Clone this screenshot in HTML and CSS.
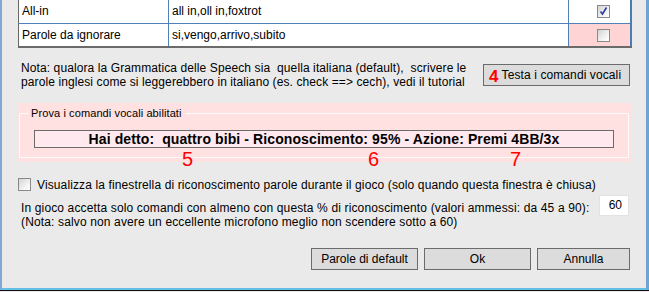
FILE: index.html
```html
<!DOCTYPE html>
<html>
<head>
<meta charset="utf-8">
<link rel="stylesheet" href="styles.css">
</head>
<body>
<div class="window">
 <div class="content">
  <table class="grid">
    <tr class="r1">
      <td class="c1">All-in</td>
      <td class="c2">all in,oll in,foxtrot</td>
      <td class="c3"><span class="cb checked"><svg width="11" height="11" viewBox="0 0 11 11"><path d="M2.5 5.5 L4.5 8 L8.5 1.5" fill="none" stroke="#2c3e9c" stroke-width="1.6"/></svg></span></td>
    </tr>
    <tr class="r2">
      <td class="c1">Parole da ignorare</td>
      <td class="c2">si,vengo,arrivo,subito</td>
      <td class="c3 pink"><span class="cb"></span></td>
    </tr>
  </table>

  <div class="nota-row">
    <p class="nota">Nota: qualora la Grammatica delle Speech sia&nbsp; quella italiana (default),&nbsp; scrivere le<br>parole inglesi come si leggerebbero in italiano (es. check ==&gt; cech), vedi il tutorial</p>
    <button class="btn test"><span class="num n4">4</span>Testa i comandi vocali</button>
  </div>

  <div class="group">
    <fieldset class="frame">
      <legend>Prova i comandi vocali abilitati</legend>
      <div class="result">Hai detto:&nbsp; quattro bibi - Riconoscimento: 95% - Azione: Premi 4BB/3x</div>
    </fieldset>
    <div class="nums">
      <span class="num n5">5</span>
      <span class="num n6">6</span>
      <span class="num n7">7</span>
    </div>
  </div>

  <label class="chk-row"><span class="cb"></span>Visualizza la finestrella di riconoscimento parole durante il gioco (solo quando questa finestra è chiusa)</label>

  <div class="accept-row">
    <p class="accept">In gioco accetta solo comandi con almeno con questa % di riconoscimento (valori ammessi: da 45 a 90):<br>(Nota: salvo non avere un eccellente microfono meglio non scendere sotto a 60)</p>
    <div class="input">60</div>
  </div>

  <div class="buttons">
    <button class="btn b1">Parole di default</button>
    <button class="btn b2">Ok</button>
    <button class="btn b3">Annulla</button>
  </div>
 </div>
</div>
</body>
</html>
```

FILE: styles.css
```css
* { box-sizing: border-box; }
html, body { margin: 0; padding: 0; }
body {
  width: 649px;
  height: 292px;
  overflow: hidden;
  font-family: "Liberation Sans", Arial, sans-serif;
  font-size: 12px;
  color: #000;
  background: #ebebeb;
}
.window {
  width: 649px;
  height: 292px;
  background: #eaeaea;
  border-left: 2px solid #7fa9d4;
  border-right: 3px solid #6fa3d6;
  border-bottom: 3px solid #62bfe6;
  padding-left: 16px;
  position: relative;
}
.window::after {
  content: "";
  position: absolute;
  left: -2px; right: -3px; bottom: -3px;
  height: 1px;
  background: #111;
}
.content { width: 612px; }
.grid {
  border-collapse: collapse;
  width: 612px;
  table-layout: fixed;
  background: #fff;
  margin-top: -1px;
}
.grid td {
  height: 24px;
  padding: 0 0 0 3px;
  border: 1px solid #4f80b8;
  font-size: 12px;
  vertical-align: middle;
}
.grid .c1 { width: 150px; border-left: 1px solid #666; }
.grid .c2 { width: 400px; }
.grid .c3 { width: 62px; text-align: center; padding: 0; border-right: 2px solid #4a7db3; }
.grid .r2 td { border-bottom: 2px solid #6a6a6a; }
.grid .r1 td { border-top: none; }
.pink { background: #ffd4d4; }
.cb {
  display: inline-block;
  flex: none;
  width: 13px;
  height: 13px;
  border: 1px solid #8a8a8a;
  background: linear-gradient(135deg, #d4d4d4 0%, #f6f6f6 70%, #fff 100%);
  vertical-align: middle;
  position: relative;
}
.cb svg { position: absolute; left: 0; top: 0; }
.c3 .cb { margin-left: 8px; }

.nota-row {
  display: grid;
  grid-template-columns: 465px 147px;
  margin-top: 13px;
  align-items: start;
}
.nota {
  margin: 0;
  padding-left: 3px;
  line-height: 14px;
  white-space: nowrap;
  letter-spacing: 0.1px;
}
.btn {
  font-family: "Liberation Sans", Arial, sans-serif;
  font-size: 12px;
  height: 22px;
  border: 1px solid #6b6b6b;
  background: #dcdcdc;
  color: #000;
  padding: 0;
}
.test {
  margin-top: 3px;
  text-align: left;
  padding-left: 5px;
  display: flex;
  align-items: center;
  letter-spacing: 0.1px;
}
.num {
  color: #f00;
  font-family: "Liberation Sans", Arial, sans-serif;
}
.n4 { font-size: 17px; font-weight: bold; margin-right: 3px; line-height: 1; position: relative; top: 1px; }

.group {
  margin-top: 14px;
  background: #ffe1e1;
  height: 59px;
  width: 613px;
  padding: 0 2px 0 1px;
  position: relative;
}
.frame {
  margin: 0;
  padding: 9px 14px 0 14px;
  border: 1px solid #fbfbfb;
  height: 50px;
  position: relative;
  top: 5px;
}
.frame legend {
  padding: 0 3px;
  margin-left: -6px;
  font-size: 11px;
  line-height: 11px;
  letter-spacing: 0.1px;
}
.result {
  height: 18px;
  border: 1px solid #6b6b6b;
  background: #ffe9ee;
  text-align: center;
  font-weight: bold;
  font-size: 14px;
  line-height: 16px;
  letter-spacing: 0.1px;
  margin-top: 2px;
}
.nums {
  position: absolute;
  left: 0; top: 46px;
  width: 100%;
  height: 20px;
}
.nums .num { position: absolute; font-size: 20px; line-height: 20px; }
.n5 { left: 164px; }
.n6 { left: 350px; }
.n7 { left: 492px; }

.chk-row {
  display: flex;
  align-items: center;
  gap: 6px;
  margin-top: 16px;
  height: 13px;
  white-space: nowrap;
  letter-spacing: 0.12px;
}
.accept-row {
  display: flex;
  justify-content: space-between;
  margin-top: 4px;
}
.accept {
  margin: 6px 0 0 3px;
  line-height: 14px;
  white-space: nowrap;
  letter-spacing: 0.14px;
}
.input {
  width: 30px;
  height: 21px;
  margin-top: 0;
  margin-right: 1px;
  background: #fff;
  border: 1px solid #e2e2e2;
  text-align: right;
  padding-right: 6px;
  line-height: 19px;
}
.buttons {
  display: flex;
  justify-content: flex-end;
  gap: 6px;
  margin-top: 19px;
}
.b1, .b2 { width: 107px; }
.b3 { width: 93px; }
```
